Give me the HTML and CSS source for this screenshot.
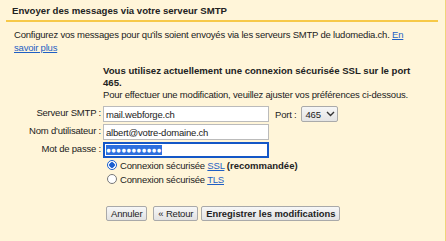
FILE: index.html
```html
<!DOCTYPE html>
<html lang="fr">
<head>
  <meta charset="UTF-8">
  <title>Envoyer des messages via votre serveur SMTP</title>
  <link rel="stylesheet" href="styles.css">
</head>
<body>
  <div class="panel">
    <div class="panel-title">Envoyer des messages via votre serveur SMTP</div>

    <p class="intro">Configurez vos messages pour qu'ils soient envoyés via les serveurs SMTP de ludomedia.ch. <a href="#">En savoir plus</a></p>

    <div class="status">
      <strong>Vous utilisez actuellement une connexion sécurisée SSL sur le port 465.</strong>
      <div class="status-note">Pour effectuer une modification, veuillez ajuster vos préférences ci-dessous.</div>
    </div>

    <div class="form">
      <label class="form-label">Serveur SMTP :</label>
      <div class="form-field">
        <input class="text-input" type="text" value="mail.webforge.ch">
        <span class="port-label">Port :</span>
        <span class="select">465 <svg width="9" height="6" viewBox="0 0 9 6"><path d="M1 1l3.5 3.5L8 1" fill="none" stroke="#333" stroke-width="1.4"/></svg></span>
      </div>

      <label class="form-label">Nom d'utilisateur :</label>
      <div class="form-field">
        <input class="text-input" type="text" value="albert@votre-domaine.ch">
      </div>

      <label class="form-label">Mot de passe :</label>
      <div class="form-field">
        <div class="text-input focused"><span class="selected">●●●●●●●●●●●</span></div>
      </div>

      <div></div>
      <div class="radios">
        <label class="radio-row"><span class="radio checked"></span><span>Connexion sécurisée <a href="#">SSL</a> <b>(recommandée)</b></span></label>
        <label class="radio-row"><span class="radio"></span><span>Connexion sécurisée <a href="#">TLS</a></span></label>
      </div>

      <div></div>
      <div class="buttons">
        <button class="btn btn-cancel">Annuler</button>
        <button class="btn">« Retour</button>
        <button class="btn btn-primary">Enregistrer les modifications</button>
      </div>
    </div>
  </div>
</body>
</html>
```

FILE: styles.css
```css
* {
  margin: 0;
  padding: 0;
  box-sizing: border-box;
}

body {
  font-family: "Liberation Sans", Arial, sans-serif;
  font-size: 9.5px;
  letter-spacing: -0.2px;
  color: #222;
  background-color: #fff5d9;
  width: 446px;
  height: 241px;
  overflow: hidden;
}

.panel {
  height: 241px;
  border-right: 1px solid #f0d37a;
  padding: 0 7px 0 6px;
}

.panel-title {
  font-weight: bold;
  font-size: 9.6px;
  letter-spacing: 0;
  padding: 5px 6px 0;
  height: 22px;
  border-bottom: 2px solid #f7c948;
}

a {
  color: #1f5fc4;
}

b {
  letter-spacing: 0;
}

.intro {
  padding: 6px 8px 0;
  line-height: 13px;
  width: 423px;
}

.status {
  margin: 11px 0 0 97px;
  line-height: 12px;
  width: 322px;
}

.status strong {
  font-size: 9.6px;
  letter-spacing: 0;
}

.form {
  display: grid;
  grid-template-columns: 97px 1fr;
  row-gap: 2px;
  margin-top: 5px;
  align-items: center;
}

.form-label {
  text-align: right;
  padding-right: 2px;
  height: 16px;
  line-height: 14px;
}

.form-field {
  display: flex;
  align-items: center;
  height: 16px;
}

.text-input {
  width: 166px;
  height: 16px;
  border: 1px solid #bbb;
  background: #fff;
  font-family: inherit;
  font-size: 9.5px;
  letter-spacing: -0.2px;
  padding: 0 2px;
  color: #222;
  outline: none;
}

.text-input.focused {
  border: 2px solid #1457c7;
  padding: 0 1px;
  display: flex;
  align-items: center;
}

.selected {
  background: #2c6fde;
  color: #fff;
  font-size: 8.4px;
  letter-spacing: 0;
  line-height: 10px;
}

.port-label {
  margin-left: 6px;
}

.select {
  display: flex;
  align-items: center;
  gap: 5px;
  margin-left: 4px;
  width: 37px;
  height: 16px;
  padding-left: 4px;
  border: 1px solid #aaa;
  border-radius: 2px;
  background: linear-gradient(#f6f6f6, #e4e4e4);
}

.radios {
  display: flex;
  flex-direction: column;
  gap: 2px;
  padding-left: 4px;
  margin-top: -1px;
}

.radio-row {
  display: flex;
  align-items: center;
  gap: 2px;
  white-space: nowrap;
  height: 12px;
}

.radio {
  width: 10px;
  height: 10px;
  border: 1px solid #777;
  border-radius: 50%;
  background: #fff;
  margin-right: 1px;
}

.radio.checked {
  border: 1px solid #1a5fd0;
  background: radial-gradient(circle, #1a5fd0 0 2.5px, #fff 3px);
}

.buttons {
  display: flex;
  gap: 3px;
  margin-top: 19px;
  padding-left: 3px;
}

.btn {
  font-family: inherit;
  font-size: 9.5px;
  letter-spacing: -0.2px;
  color: #222;
  height: 15px;
  padding: 0 4px;
  border: 1px solid #a9a9a9;
  border-radius: 2px;
  background: linear-gradient(#f7f7f7, #e2e2e2);
}

.btn-cancel {
  margin-right: 3px;
}

.btn-primary {
  font-weight: bold;
  font-size: 9.4px;
  letter-spacing: 0;
}
```
